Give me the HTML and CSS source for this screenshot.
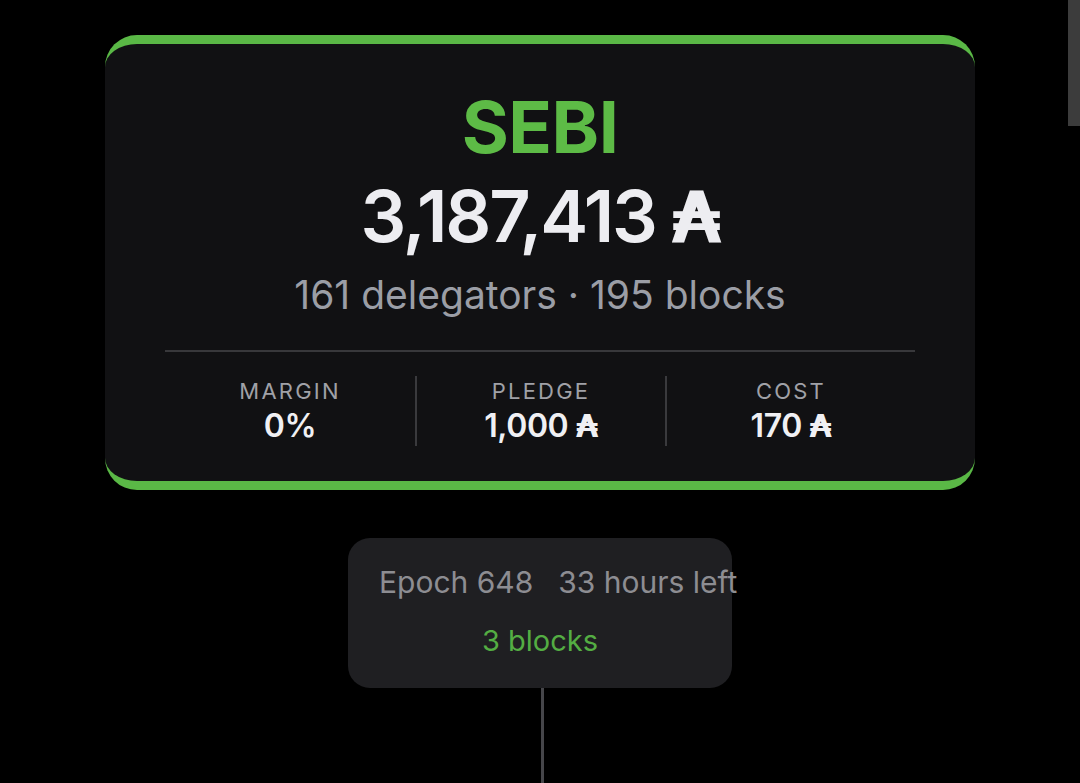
FILE: index.html
```html
<!DOCTYPE html>
<html lang="en">
<head>
<meta charset="utf-8">
<title>SEBI pool</title>
<link rel="stylesheet" href="styles.css">
</head>
<body>
<div class="scroll-thumb"></div>
<main class="page">
  <section class="pool-card">
    <h1 class="pool-name">SEBI</h1>
    <div class="pool-stake">3,187,413 <span class="ada">₳</span></div>
    <div class="pool-sub">161 delegators · 195 blocks</div>
    <div class="divider"></div>
    <div class="stats">
      <div class="stat">
        <div class="stat-label">MARGIN</div>
        <div class="stat-value">0%</div>
      </div>
      <div class="stat">
        <div class="stat-label">PLEDGE</div>
        <div class="stat-value">1,000 <span class="ada">₳</span></div>
      </div>
      <div class="stat">
        <div class="stat-label">COST</div>
        <div class="stat-value">170 <span class="ada">₳</span></div>
      </div>
    </div>
  </section>

  <section class="epoch-box">
    <div class="epoch-row"><span>Epoch 648</span><span class="epoch-left">33 hours left</span></div>
    <div class="epoch-blocks">3 blocks</div>
  </section>
  <div class="timeline"></div>
</main>
</body>
</html>
```

FILE: styles.css
```css
html, body {
  margin: 0;
  padding: 0;
  background: #000;
  overflow: hidden;
}

body {
  font-family: Inter, "Noto Sans", "DejaVu Sans", sans-serif;
  color: #ececf0;
  height: 783px;
}

.scroll-thumb {
  position: fixed;
  top: 0;
  right: 0;
  width: 12px;
  height: 126px;
  background: #3c3c3c;
}

.page {
  display: flex;
  flex-direction: column;
  align-items: center;
  padding-top: 35px;
}

.pool-card {
  box-sizing: border-box;
  width: 870px;
  background: #111113;
  border-top: 9px solid #5ab846;
  border-bottom: 9px solid #5ab846;
  border-radius: 32px;
  padding: 43px 60px 35px;
  display: flex;
  flex-direction: column;
  align-items: stretch;
  text-align: center;
}

.pool-name {
  margin: 0;
  font-size: 72px;
  line-height: 80px;
  font-weight: 700;
  color: #5dbb46;
  letter-spacing: -0.5px;
}

.pool-stake {
  margin-top: 9px;
  font-size: 72px;
  line-height: 80px;
  font-weight: 600;
  color: #ededf1;
  letter-spacing: -2.2px;
}

.ada {
  font-family: "DejaVu Sans", sans-serif;
}

.pool-sub {
  margin-top: 16px;
  font-size: 39px;
  line-height: 44px;
  color: #9b9ea6;
}

.divider {
  margin-top: 33px;
  height: 2px;
  background: #38383b;
}

.stats {
  margin-top: 24px;
  display: grid;
  grid-template-columns: 1fr 1fr 1fr;
}

.stat {
  display: flex;
  flex-direction: column;
  align-items: center;
  border-left: 2px solid #3a3a3d;
}

.stat:first-child {
  border-left: none;
}

.stat-label {
  font-size: 22px;
  line-height: 30px;
  letter-spacing: 2.2px;
  color: #a0a1a7;
}

.stat-value {
  font-size: 32px;
  line-height: 39px;
  font-weight: 600;
  color: #f0f0f3;
  letter-spacing: -0.4px;
}

.epoch-box {
  box-sizing: border-box;
  margin-top: 48px;
  width: 384px;
  height: 150px;
  background: #1f1f22;
  border-radius: 22px;
  padding-top: 24px;
}

.epoch-row {
  padding-left: 31px;
  white-space: nowrap;
  font-size: 30px;
  line-height: 40px;
  color: #8d8d92;
}

.epoch-left {
  margin-left: 25px;
}

.epoch-blocks {
  margin-top: 19px;
  text-align: center;
  font-size: 29px;
  line-height: 40px;
  color: #54ad43;
}

.timeline {
  width: 3px;
  height: 100px;
  background: #46464a;
  margin-left: 5px;
}
```
